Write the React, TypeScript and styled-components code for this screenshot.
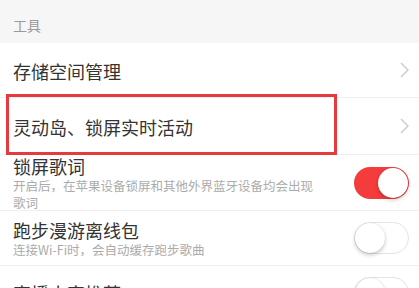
import React from "react";
import styled, { createGlobalStyle } from "styled-components";

const Global = createGlobalStyle`
  html, body { margin: 0; padding: 0; background: #fff; }
  body { font-family: "Noto Sans CJK SC", "Noto Sans", sans-serif; -webkit-font-smoothing: antialiased; }
`;

const Page = styled.div`
  width: 419px;
  height: 288px;
  overflow: hidden;
  background: #fff;
`;

const SectionHeader = styled.div`
  height: 43px;
  box-sizing: border-box;
  padding: 7px 0 0 13px;
  display: flex;
  align-items: center;
  background: #f6f6f6;
  color: #9a9a9a;
  font-size: 14px;
`;

const Row = styled.div<{ $h?: number }>`
  position: relative;
  height: ${(p) => p.$h ?? 55}px;
  box-sizing: border-box;
  padding: 0 10px 0 13px;
  display: flex;
  align-items: center;
  gap: 30px;
  border-bottom: 1px solid #efefef;
`;

const TextCol = styled.div<{ $shift?: number }>`
  flex: 1;
  min-width: 0;
  display: flex;
  flex-direction: column;
  margin-top: ${(p) => p.$shift ?? 0}px;
`;

const Title = styled.div`
  font-size: 18px;
  line-height: 22px;
  color: #333;
  white-space: nowrap;
`;

const Sub = styled.div`
  font-size: 12.5px;
  line-height: 17px;
  color: #ababab;
`;

const Highlight = styled.div`
  position: absolute;
  left: 6px;
  top: -4px;
  width: 331px;
  height: 61px;
  box-sizing: border-box;
  border: 3px solid #e63a3f;
  pointer-events: none;
`;

const Track = styled.div<{ $on: boolean }>`
  position: relative;
  flex: none;
  width: 55px;
  height: 32px;
  box-sizing: border-box;
  border-radius: 16px;
  background: ${(p) => (p.$on ? "#f53c3c" : "#fff")};
  border: ${(p) => (p.$on ? "none" : "1px solid #e4e4e4")};
`;

const Knob = styled.div<{ $on: boolean }>`
  position: absolute;
  top: ${(p) => (p.$on ? 1 : 0)}px;
  ${(p) => (p.$on ? "right: 1px;" : "left: 0;")}
  width: 30px;
  height: 30px;
  border-radius: 50%;
  background: #fff;
  box-shadow: 0 2px 4px rgba(0, 0, 0, 0.22), 0 0 1px rgba(0, 0, 0, 0.15);
`;

const Switch = ({ on }: { on: boolean }) => (
  <Track $on={on}>
    <Knob $on={on} />
  </Track>
);

const ChevronBox = styled.div`
  flex: none;
  width: 9px;
  display: flex;
  align-items: center;
  justify-content: flex-end;
`;

const Chevron = () => (
  <ChevronBox>
    <svg width="9" height="16" viewBox="0 0 9 16">
      <polyline points="1,1 8,8 1,15" fill="none" stroke="#c9c9c9" strokeWidth="1.4" />
    </svg>
  </ChevronBox>
);

export default function App() {
  return (
    <Page>
      <Global />
      <SectionHeader>工具</SectionHeader>
      <Row $h={55}>
        <TextCol $shift={2}>
          <Title>存储空间管理</Title>
        </TextCol>
        <Chevron />
      </Row>
      <Row $h={57}>
        <TextCol $shift={2}>
          <Title>灵动岛、锁屏实时活动</Title>
        </TextCol>
        <Chevron />
        <Highlight />
      </Row>
      <Row $h={56}>
        <TextCol $shift={1}>
          <Title>锁屏歌词</Title>
          <Sub>开启后，在苹果设备锁屏和其他外界蓝牙设备均会出现歌词</Sub>
        </TextCol>
        <Switch on={true} />
      </Row>
      <Row $h={55}>
        <TextCol $shift={1}>
          <Title>跑步漫游离线包</Title>
          <Sub>连接Wi-Fi时，会自动缓存跑步歌曲</Sub>
        </TextCol>
        <Switch on={false} />
      </Row>
      <Row $h={55}>
        <TextCol>
          <Title>直播小窗推荐</Title>
        </TextCol>
        <Switch on={false} />
      </Row>
    </Page>
  );
}
